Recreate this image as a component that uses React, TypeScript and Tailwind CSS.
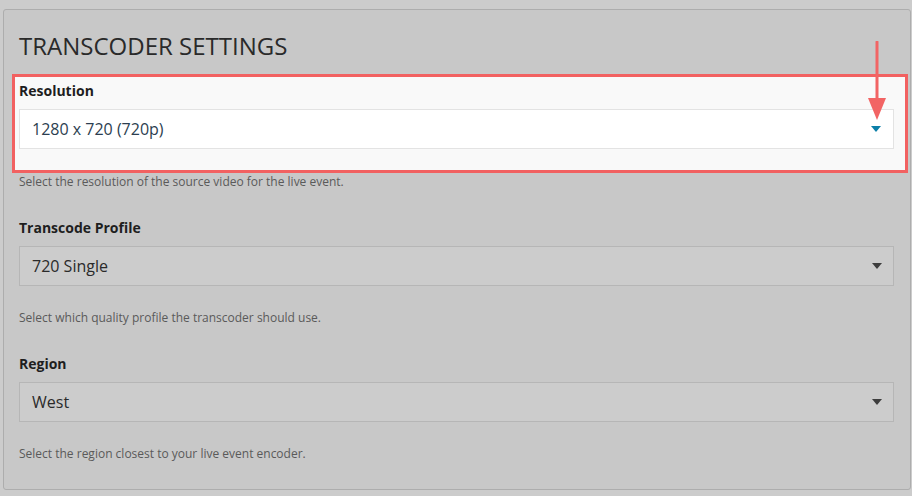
import React from "react";

function Caret({ className }: { className: string }) {
  return (
    <svg width="10" height="6" viewBox="0 0 10 6" className={className}>
      <path d="M0 0h10L5 6z" fill="currentColor" />
    </svg>
  );
}

function Field({
  label,
  value,
  help,
  active = false,
}: {
  label: string;
  value: string;
  help: string;
  active?: boolean;
}) {
  return (
    <>
      <div className="text-[14px] leading-5 font-bold text-[#1e1e1e]">{label}</div>
      <div
        className={
          active
            ? "mt-2 h-10 flex items-center justify-between pl-3 pr-3 border border-[#e3e3e3] bg-white"
            : "mt-2 h-10 flex items-center justify-between pl-3 pr-[11px] border border-[#b6b6b6] bg-[#cccccc]"
        }
      >
        <span className={active ? "text-[16px] text-[#2c3e50]" : "text-[16px] text-[#2a2a2a]"}>{value}</span>
        <Caret className={active ? "text-[#0b7fa8]" : "text-[#3d3d3d]"} />
      </div>
      {!active && <p className="mt-6 text-[12px] leading-4 text-[#5a5a5a]">{help}</p>}
    </>
  );
}

export default function App() {
  return (
    <div
      className="relative w-[912px] h-[496px] bg-[#cccccc] pt-[9px] pl-[3px] overflow-hidden"
      style={{ fontFamily: '"Open Sans", "Noto Sans", sans-serif' }}
    >
      <div className="w-[908px] border border-[#adadad] rounded-[3px] bg-[#c8c8c8] pt-5 pb-[27px] pl-[15px] pr-[16px]">
        <h1 className="text-[24px] leading-8 font-normal text-[#2a2a2a]">TRANSCODER SETTINGS</h1>

        {/* highlighted group */}
        <div className="mt-3 -ml-[7px] -mr-[14px] border-[3px] border-[#f26161] bg-[#f9f9f9] pt-1 pb-[21px] pl-1 pr-[11px]">
          <Field label="Resolution" value="1280 x 720 (720p)" help="" active />
        </div>
        <p className="mt-[1px] text-[12px] leading-4 text-[#5a5a5a]">
          Select the resolution of the source video for the live event.
        </p>

        <div className="mt-[28px]">
          <Field
            label="Transcode Profile"
            value="720 Single"
            help="Select which quality profile the transcoder should use."
          />
        </div>

        <div className="mt-[28px]">
          <Field label="Region" value="West" help="Select the region closest to your live event encoder." />
        </div>
      </div>

      {/* annotation arrow */}
      <svg className="absolute left-[866px] top-[41px]" width="22" height="82" viewBox="0 0 22 82">
        <line x1="11" y1="1" x2="11" y2="62" stroke="#f26464" strokeWidth="3" strokeLinecap="round" />
        <path d="M2 57h18L11 79z" fill="#f26464" />
      </svg>
    </div>
  );
}
